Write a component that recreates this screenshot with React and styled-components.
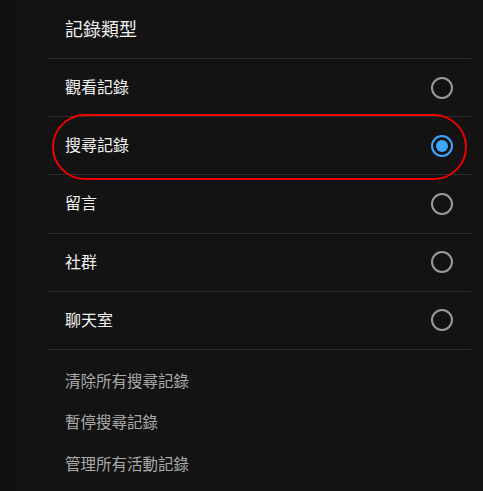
import styled, { createGlobalStyle } from "styled-components";

const GlobalStyle = createGlobalStyle`
  html, body {
    margin: 0;
    padding: 0;
    background: #131313;
  }
  body {
    font-family: "Noto Sans CJK TC", "Noto Sans", sans-serif;
    color: #fff;
  }
`;

const Page = styled.div`
  position: relative;
  width: 483px;
  height: 491px;
  overflow: hidden;
  background: linear-gradient(to right, #101010 0px, #131313 30px);
`;

const Panel = styled.div`
  margin-left: 48px;
  width: 423px;
  display: flex;
  flex-direction: column;
`;

const Title = styled.div`
  height: 59px;
  display: flex;
  align-items: center;
  padding: 0 0 2px 17px;
  font-size: 18px;
  color: #f1f1f1;
  border-bottom: 1px solid #2e2e2e;
  box-sizing: border-box;
`;

const Row = styled.label`
  height: 58.2px;
  display: flex;
  align-items: center;
  justify-content: space-between;
  padding: 0 18px 0 17px;
  font-size: 16px;
  color: #f1f1f1;
  border-bottom: 1px solid #2e2e2e;
  box-sizing: border-box;
  cursor: pointer;
`;

const RowText = styled.span`
  padding-bottom: 3px;
`;

const Radio = styled.span`
  width: 22px;
  height: 22px;
  border-radius: 50%;
  box-sizing: border-box;
  border: 2px solid ${(p) => (p.$checked ? "#3ea6ff" : "#9a9a9a")};
  display: flex;
  align-items: center;
  justify-content: center;

  &::after {
    content: "";
    width: 12px;
    height: 12px;
    border-radius: 50%;
    background: #3ea6ff;
    display: ${(p) => (p.$checked ? "block" : "none")};
  }
`;

const Links = styled.div`
  display: flex;
  flex-direction: column;
  padding: 9px 0 0 17px;
`;

const LinkItem = styled.div`
  height: 41.5px;
  display: flex;
  align-items: center;
  font-size: 15.5px;
  color: #aaaaaa;
`;

const Highlight = styled.div`
  position: absolute;
  left: 52px;
  top: 114px;
  width: 415px;
  height: 66px;
  border: 2px solid #ee0000;
  border-radius: 34px;
  box-sizing: border-box;
  pointer-events: none;
`;

const types = ["觀看記錄", "搜尋記錄", "留言", "社群", "聊天室"];
const links = ["清除所有搜尋記錄", "暫停搜尋記錄", "管理所有活動記錄"];

const App = () => {
  const selected = "搜尋記錄";
  return (
    <Page>
      <GlobalStyle />
      <Panel>
        <Title>記錄類型</Title>
        {types.map((t) => (
          <Row key={t}>
            <RowText>{t}</RowText>
            <Radio $checked={t === selected} />
          </Row>
        ))}
        <Links>
          {links.map((l) => (
            <LinkItem key={l}>{l}</LinkItem>
          ))}
        </Links>
      </Panel>
      <Highlight />
    </Page>
  );
};

export default App;
